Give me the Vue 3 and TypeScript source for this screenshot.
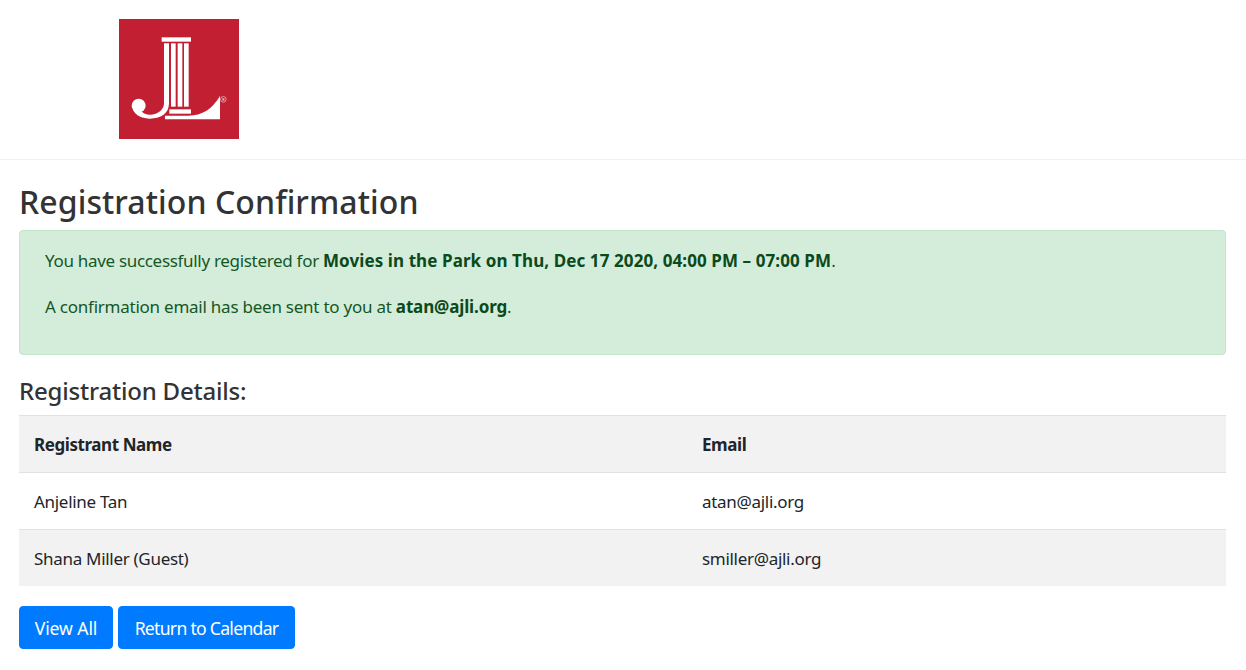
<template>
  <div class="page">
    <header class="site-header">
      <svg class="logo" viewBox="27 27 360 360" role="img" aria-label="Logo">
        <rect x="27" y="27" width="360" height="360" fill="#c22032" />
        <g fill="#fff">
          <rect x="155" y="82" width="88" height="13" />
          <rect x="183" y="100" width="14" height="190" />
          <rect x="203" y="100" width="14" height="190" />
          <rect x="222" y="100" width="14" height="190" />
          <rect x="178" y="298" width="65" height="13" />
          <circle cx="86" cy="287" r="21" />
          <path d="M68 298C76 318 100 326 120 326C150 326 177 312 177 280V100H162V280C162 298 146 312 124 314C108 315 100 310 96 305z" />
          <path d="M165 317h70c42 0 72-20 95-59v70H165z" />
        </g>
        <circle cx="340" cy="268" r="8.5" fill="none" stroke="#fff" stroke-width="1.5" />
        <text x="340" y="272" class="reg">R</text>
      </svg>
    </header>
    <main class="content">
      <h2 class="title">Registration Confirmation</h2>
      <div class="alert">
        <p class="alert-event">You have successfully registered for <b>Movies in the Park on Thu, Dec 17 2020, 04:00 PM – 07:00 PM</b>.</p>
        <p class="alert-email">A confirmation email has been sent to you at <b>atan@ajli.org</b>.</p>
      </div>
      <h4 class="subtitle">Registration Details:</h4>
      <table class="table">
        <thead>
          <tr>
            <th>Registrant Name</th>
            <th>Email</th>
          </tr>
        </thead>
        <tbody>
          <tr v-for="row in rows" :key="row.email">
            <td>{{ row.name }}</td>
            <td>{{ row.email }}</td>
          </tr>
        </tbody>
      </table>
      <div class="actions">
        <button class="btn btn-short">View All</button>
        <button class="btn">Return to Calendar</button>
      </div>
    </main>
  </div>
</template>

<script setup lang="ts">
const rows = [
  { name: 'Anjeline Tan', email: 'atan@ajli.org' },
  { name: 'Shana Miller (Guest)', email: 'smiller@ajli.org' },
]
</script>

<style>
body {
  background: #fff;
}
</style>

<style scoped>
.page {
  font-family: "Noto Sans", "Open Sans", "Liberation Sans", sans-serif;
  font-size: 16px;
  color: #212529;
}

.site-header {
  height: 160px;
  padding: 19px 119px 0;
  border-bottom: 1px solid #f2f2f2;
  box-sizing: border-box;
}

.logo {
  display: block;
  width: 120px;
  height: 120px;
}

.reg {
  fill: #fff;
  font-size: 11px;
  text-anchor: middle;
}

.content {
  padding: 0 20px 0 19px;
}

.title {
  margin: 0;
  padding-top: 21px;
  height: 70px;
  box-sizing: border-box;
  font-size: 32px;
  line-height: 42px;
  font-weight: 500;
  color: #333;
  letter-spacing: 0.08px;
}

.alert {
  height: 125px;
  box-sizing: border-box;
  padding: 18px 25px 0;
  background: #d4edda;
  border: 1px solid #c3e6cb;
  border-radius: 4px;
  color: #155724;
  font-size: 17px;
  line-height: 24px;
}

.alert p {
  margin: 0 0 22px;
}

.alert-event {
  letter-spacing: -0.31px;
}

.alert-email {
  letter-spacing: -0.24px;
}

.alert b {
  color: #0b4a1b;
  font-weight: 700;
}

.alert-event b {
  letter-spacing: 0.09px;
}

.alert-email b {
  letter-spacing: -0.14px;
}

.subtitle {
  margin: 0;
  padding-top: 21px;
  height: 60px;
  box-sizing: border-box;
  font-size: 24px;
  line-height: 30px;
  font-weight: 500;
  color: #333;
  letter-spacing: -0.2px;
}

.table {
  width: 100%;
  border-collapse: collapse;
  table-layout: fixed;
  font-size: 17px;
  letter-spacing: -0.3px;
}

.table th,
.table td {
  height: 56px;
  padding: 0 15px;
  text-align: left;
  border-top: 1px solid #dee2e6;
}

.table th:first-child,
.table td:first-child {
  width: 668px;
  box-sizing: border-box;
}

.table th {
  background: #f2f2f2;
  font-weight: 700;
  color: #212529;
  letter-spacing: -0.42px;
}

.table tbody tr:nth-child(even) td {
  background: #f2f2f2;
}

.actions {
  display: flex;
  gap: 5px;
  margin-top: 20px;
}

.btn {
  width: 177px;
  height: 43px;
  padding: 0;
  border: 1px solid #007bff;
  border-radius: 4px;
  background: #007bff;
  color: #fff;
  font-family: inherit;
  font-size: 17.6px;
  letter-spacing: -0.72px;
}

.btn-short {
  width: 94px;
  letter-spacing: -0.1px;
}
</style>
